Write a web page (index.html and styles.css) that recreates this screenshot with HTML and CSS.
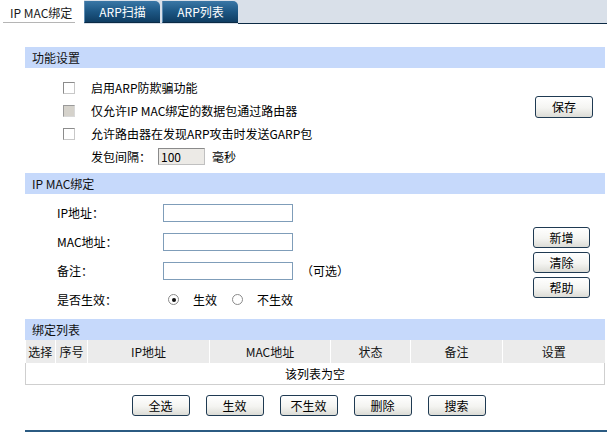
FILE: index.html
```html
<!DOCTYPE html>
<html lang="zh-CN">
<head>
<meta charset="utf-8">
<title>IP MAC绑定</title>
<link rel="stylesheet" href="styles.css">
</head>
<body>
<div class="tabbar">
  <div class="tab tab-active"><span class="tab-label">IP MAC绑定</span></div>
  <div class="tab tab-dark">ARP扫描</div>
  <div class="tab tab-dark">ARP列表</div>
  <div class="tab-rest"></div>
</div>

<div class="page">
  <div class="section">
    <div class="section-head">功能设置</div>
    <div class="section-body body-func">
      <div class="rows">
        <div class="row row-check"><span class="cbox"></span><span>启用ARP防欺骗功能</span></div>
        <div class="row row-check"><span class="cbox cbox-disabled"></span><span>仅允许IP MAC绑定的数据包通过路由器</span></div>
        <div class="row row-check"><span class="cbox"></span><span>允许路由器在发现ARP攻击时发送GARP包</span></div>
        <div class="row row-interval"><span>发包间隔：</span><span class="small-input">100</span><span class="unit">毫秒</span></div>
      </div>
      <div class="side side-save">
        <button class="btn">保存</button>
      </div>
    </div>
  </div>

  <div class="section">
    <div class="section-head">IP MAC绑定</div>
    <div class="section-body body-bind">
      <div class="rows">
        <div class="row row-field"><span class="flabel">IP地址：</span><span class="tinput"></span></div>
        <div class="row row-field"><span class="flabel">MAC地址：</span><span class="tinput"></span></div>
        <div class="row row-field"><span class="flabel">备注：</span><span class="tinput"></span><span class="opt">（可选）</span></div>
        <div class="row row-field"><span class="flabel">是否生效：</span><span class="radio radio-on"></span><span class="rlabel">生效</span><span class="radio radio-second"></span><span class="rlabel">不生效</span></div>
      </div>
      <div class="side side-btns">
        <button class="btn">新增</button>
        <button class="btn">清除</button>
        <button class="btn">帮助</button>
      </div>
    </div>
  </div>

  <div class="section">
    <div class="section-head">绑定列表</div>
    <table class="list">
      <colgroup>
        <col class="c1"><col class="c2"><col class="c3"><col class="c4"><col class="c5"><col class="c6"><col class="c7">
      </colgroup>
      <thead>
        <tr><th>选择</th><th>序号</th><th>IP地址</th><th>MAC地址</th><th>状态</th><th>备注</th><th>设置</th></tr>
      </thead>
      <tbody>
        <tr><td colspan="7" class="empty">该列表为空</td></tr>
      </tbody>
    </table>
    <div class="list-btns">
      <button class="btn">全选</button>
      <button class="btn">生效</button>
      <button class="btn">不生效</button>
      <button class="btn">删除</button>
      <button class="btn">搜索</button>
    </div>
  </div>
  <div class="bottom-line"></div>
</div>
</body>
</html>
```

FILE: styles.css
```css
html, body {
  margin: 0;
  padding: 0;
  background: #ffffff;
}
body {
  font-family: "Noto Sans CJK SC", "Liberation Sans", sans-serif;
  font-size: 12px;
  color: #000;
  width: 607px;
  height: 436px;
  overflow: hidden;
}

/* tabs */
.tabbar {
  display: flex;
  height: 24px;
  background: #d9e0e9;
}
.tab {
  box-sizing: border-box;
  display: flex;
  align-items: center;
  white-space: nowrap;
  flex: none;
}
.tab-active {
  width: 84px;
  height: 24px;
  background: #ffffff;
  padding-left: 3px;
}
.tab-label {
  display: block;
  height: 21px;
  line-height: 21px;
  width: 72px;
  box-sizing: border-box;
  padding-left: 7px;
  border-bottom: 1px solid #b5b5b5;
  color: #1a1a1a;
  white-space: nowrap;
}
.tab-dark {
  width: 76px;
  height: 22px;
  margin-top: 1px;
  justify-content: center;
  color: #ffffff;
  background: linear-gradient(#3a77a6, #1d5784 50%, #0f3d62);
  border-radius: 0 5px 0 0;
  border-left: 1px solid #5f8db3;
  border-bottom: 1px solid #0b2a44;
}
.tab-dark + .tab-dark {
  margin-left: 2px;
}
.tab-rest {
  flex: 1;
  height: 24px;
  box-sizing: border-box;
  border-bottom: 1px solid #0b2a44;
}

/* page */
.page {
  margin-left: 25px;
  width: 580px;
}
.section-head {
  height: 21px;
  line-height: 21px;
  background: #c6d9fb;
  padding-left: 7px;
  color: #111;
}
.section:first-child .section-head {
  margin-top: 23px;
}
.section-body {
  display: flex;
}
.rows {
  flex: 1;
  display: flex;
  flex-direction: column;
}
.row {
  display: flex;
  align-items: center;
}

/* function settings */
.body-func {
  padding: 8px 0 5px 38px;
}
.row-check, .row-interval {
  height: 23px;
}
.cbox {
  box-sizing: border-box;
  width: 12px;
  height: 12px;
  border: 1px solid #8c8c8c;
  border-right-color: #c8c8c8;
  border-bottom-color: #c8c8c8;
  background: #fff;
  margin-right: 16px;
}
.cbox-disabled {
  background: #d5d2cb;
  border-color: #9a9a9a #d9d9d9 #d9d9d9 #9a9a9a;
}
.row-interval {
  padding-left: 28px;
}
.small-input {
  box-sizing: border-box;
  width: 47px;
  height: 17px;
  line-height: 15px;
  margin-left: 7px;
  padding-left: 2px;
  border: 1px solid #8a8a8a;
  border-right-color: #c0c0c0;
  border-bottom-color: #c0c0c0;
  background: #eceae6;
}
.unit {
  margin-left: 7px;
}
.side {
  display: flex;
  flex-direction: column;
}
.side-save {
  padding-top: 20px;
  margin-right: 12px;
}

/* buttons */
.btn {
  box-sizing: border-box;
  width: 58px;
  height: 22px;
  padding: 0;
  font-family: "Noto Sans CJK SC", "Liberation Sans", sans-serif;
  font-size: 12px;
  color: #000;
  border: 1px solid #1f3a52;
  border-radius: 3px;
  background: linear-gradient(#ffffff, #f4f4f1 55%, #dcdcd6);
  line-height: 20px;
}

/* bind */
.body-bind {
  padding: 4px 0 5px 32px;
}
.row-field {
  height: 29px;
}
.flabel {
  width: 106px;
}
.tinput {
  box-sizing: border-box;
  width: 130px;
  height: 18px;
  border: 1px solid #7f9db9;
  background: #fff;
}
.opt {
  margin-left: 8px;
}
.radio {
  box-sizing: border-box;
  width: 11px;
  height: 11px;
  border-radius: 50%;
  border: 1px solid #8a8a8a;
  background: #fff;
  margin-left: 5px;
  position: relative;
}
.radio-on::after {
  content: "";
  position: absolute;
  left: 2.5px;
  top: 2.5px;
  width: 4px;
  height: 4px;
  border-radius: 50%;
  background: #111;
}
.radio-second {
  margin-left: 15px;
}
.rlabel {
  margin-left: 14px;
}
.side-btns {
  padding-top: 29px;
  margin-right: 15px;
  gap: 4px;
}
.side-btns .btn {
  height: 21px;
  width: 57px;
  line-height: 19px;
}

/* list */
.list {
  border-collapse: collapse;
  width: 579px;
  table-layout: fixed;
}
.c1 { width: 30px; }
.c2 { width: 32px; }
.c3 { width: 122px; }
.c4 { width: 121px; }
.c5 { width: 80px; }
.c6 { width: 92px; }
.c7 { width: 102px; }
.list th {
  height: 23px;
  padding: 0;
  font-weight: normal;
  background: #ebebeb;
  border-left: 1px solid #ffffff;
  text-align: center;
  color: #111;
}
.list th:first-child {
  border-left: none;
}
.list td.empty {
  height: 21px;
  padding: 0;
  text-align: center;
  border: 1px solid #cfcfcf;
  border-top: none;
  background: #fff;
}
.list-btns {
  display: flex;
  justify-content: center;
  gap: 16px;
  padding: 10px 13px 0 0;
}
.list-btns .btn {
  height: 21px;
  line-height: 19px;
}
.bottom-line {
  margin-top: 14px;
  height: 2px;
  background: #2b5b82;
  width: 582px;
}
```
